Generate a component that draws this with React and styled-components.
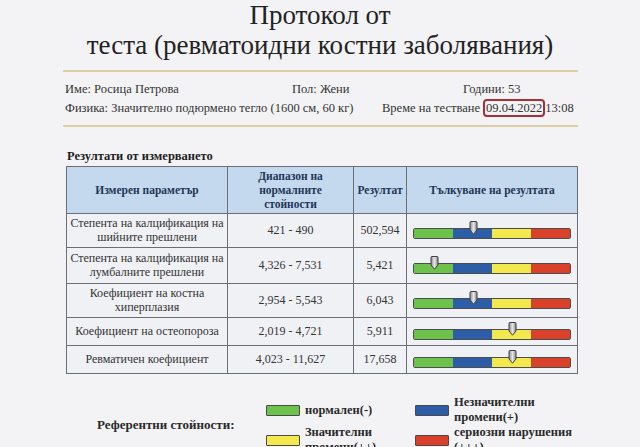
import React from 'react';
import styled, {createGlobalStyle} from 'styled-components';

const GlobalStyle = createGlobalStyle`
    body {
        margin: 0;
        background: #f3f3f5;
        font-family: "Liberation Serif", "Times New Roman", serif;
        color: #2b2b2b;
    }
`;

const Page = styled.div`
    width: 640px;
    height: 447px;
    overflow: hidden;
`;

const Title = styled.h1`
    margin: 0;
    font-size: 27px;
    font-weight: normal;
    line-height: 30px;
    text-align: center;
    color: #222;
`;

const GoldRule = styled.div`
    height: 2px;
    margin: ${p => p.top}px 62px 0 63px;
    background: #dccfa6;
`;

const Info = styled.div`
    padding: 8px 0 0 65px;
    font-size: 12.5px;
    line-height: 19px;
    color: #333;
`;

const InfoRow = styled.div`
    display: flex;
`;

const InfoCell = styled.span`
    width: ${p => p.w ? p.w + 'px' : 'auto'};
    white-space: nowrap;
`;

const DateBox = styled.span`
    border: 2px solid #a5303a;
    border-radius: 4px;
    padding: 0 1px;
`;

const SectionTitle = styled.div`
    margin: 22px 0 3px 67px;
    font-size: 12.5px;
    font-weight: bold;
    line-height: 14px;
    color: #1e1e1e;
`;

const Table = styled.table`
    margin-left: 66px;
    width: 511px;
    border-collapse: collapse;
    table-layout: fixed;
    font-size: 12px;
`;

const Th = styled.th`
    background: #c4d9ed;
    color: #1f3658;
    font-weight: bold;
    font-size: 11.5px;
    line-height: 14px;
    height: 46px;
    padding: 0 2px;
    border: 1px solid #6b6f75;
    text-align: center;
`;

const Td = styled.td`
    background: #eff1f5;
    border: 1px solid #6b6f75;
    text-align: center;
    line-height: 13.5px;
    height: ${p => p.h}px;
    padding: 0 2px;
    color: #333;
`;

const BarWrap = styled.div`
    position: relative;
    margin: 5px 4px 0 4px;
    height: 9px;
    display: flex;
    border: 1px solid #4d4d4d;
    border-radius: 2px;
`;

const Seg = styled.div`
    flex: 1;
    background: ${p => p.c};
    &:first-child { border-radius: 1px 0 0 1px; }
    &:last-child { border-radius: 0 1px 1px 0; }
`;

const Pin = styled.svg`
    position: absolute;
    top: -8px;
    width: 9px;
    height: 14px;
    margin-left: -4px;
`;

const Legend = styled.div`
    display: flex;
    align-items: center;
    margin-top: 21px;
`;

const LegendLabel = styled.div`
    width: 169px;
    padding-left: 97px;
    font-size: 13px;
    font-weight: bold;
    color: #2a2a2a;
`;

const LegendGrid = styled.div`
    display: grid;
    grid-template-columns: 149px 170px;
    grid-auto-rows: 30px;
`;

const LegendItem = styled.div`
    display: flex;
    align-items: center;
    gap: 5px;
    font-size: 12.5px;
    font-weight: bold;
    line-height: 15px;
    color: #2a2a2a;
`;

const Swatch = styled.div`
    flex: none;
    width: 32px;
    height: 9px;
    background: ${p => p.c};
    border: 1px solid #4a4a4a;
    border-radius: 1px;
`;

const COLORS = ['#6cc24a', '#2d5da6', '#f3e94e', '#d9412b'];

const rows = [
    {name: ['Степента на калцификация на', 'шийните прешлени'], range: '421 - 490', value: '502,594', pos: 38, h: 33},
    {name: ['Степента на калцификация на', 'лумбалните прешлени'], range: '4,326 - 7,531', value: '5,421', pos: 12.5, h: 35},
    {name: ['Коефициент на костна', 'хиперплазия'], range: '2,954 - 5,543', value: '6,043', pos: 37.5, h: 33},
    {name: ['Коефициент на остеопороза'], range: '2,019 - 4,721', value: '5,911', pos: 63, h: 27},
    {name: ['Ревматичен коефициент'], range: '4,023 - 11,627', value: '17,658', pos: 63, h: 27},
];

function Scale({pos}) {
    return (
        <BarWrap>
            {COLORS.map(c => <Seg key={c} c={c} />)}
            <Pin viewBox="0 0 9 14" style={{left: pos + '%'}}>
                <defs>
                    <linearGradient id="pinGrad" x1="0" x2="1">
                        <stop offset="0" stopColor="#8d8d8d" />
                        <stop offset="0.5" stopColor="#e6e6e6" />
                        <stop offset="1" stopColor="#8a8a8a" />
                    </linearGradient>
                </defs>
                <path d="M1 1.5 Q1 0.5 2 0.5 H7 Q8 0.5 8 1.5 V9 L4.5 13.2 L1 9 Z" fill="url(#pinGrad)" stroke="#3f3f3f" strokeWidth="1" />
            </Pin>
        </BarWrap>
    );
}

export default function App() {
    return (
        <Page>
            <GlobalStyle />
            <Title>Протокол от<br />теста (ревматоидни костни заболявания)</Title>
            <GoldRule top={10} />
            <Info>
                <InfoRow>
                    <InfoCell w={227}>Име: Росица Петрова</InfoCell>
                    <InfoCell w={171}>Пол: Жени</InfoCell>
                    <InfoCell>Години: 53</InfoCell>
                </InfoRow>
                <InfoRow>
                    <InfoCell w={317}>Физика: Значително подюрмено тегло (1600 см, 60 кг)</InfoCell>
                    <InfoCell>Време на тестване <DateBox>09.04.2022</DateBox>13:08</InfoCell>
                </InfoRow>
            </Info>
            <GoldRule top={7} />
            <SectionTitle>Резултати от измерването</SectionTitle>
            <Table>
                <colgroup>
                    <col style={{width: 161}} />
                    <col style={{width: 126}} />
                    <col style={{width: 53}} />
                    <col style={{width: 171}} />
                </colgroup>
                <thead>
                    <tr>
                        <Th>Измерен параметър</Th>
                        <Th>Диапазон на<br />нормалните<br />стойности</Th>
                        <Th>Резултат</Th>
                        <Th>Тълкуване на резултата</Th>
                    </tr>
                </thead>
                <tbody>
                    {rows.map(r =>
                        <tr key={r.value}>
                            <Td h={r.h}>{r.name.map((l, i) => <div key={i}>{l}</div>)}</Td>
                            <Td h={r.h}>{r.range}</Td>
                            <Td h={r.h}>{r.value}</Td>
                            <Td h={r.h}><Scale pos={r.pos} /></Td>
                        </tr>
                    )}
                </tbody>
            </Table>
            <Legend>
                <LegendLabel>Референтни стойности:</LegendLabel>
                <LegendGrid>
                    <LegendItem><Swatch c={COLORS[0]} />нормален(-)</LegendItem>
                    <LegendItem><Swatch c={COLORS[1]} /><div>Незначителни<br />промени(+)</div></LegendItem>
                    <LegendItem><Swatch c={COLORS[2]} /><div>Значителни<br />промени(++)</div></LegendItem>
                    <LegendItem><Swatch c={COLORS[3]} /><div>сериозни нарушения<br />(+++)</div></LegendItem>
                </LegendGrid>
            </Legend>
        </Page>
    );
}
